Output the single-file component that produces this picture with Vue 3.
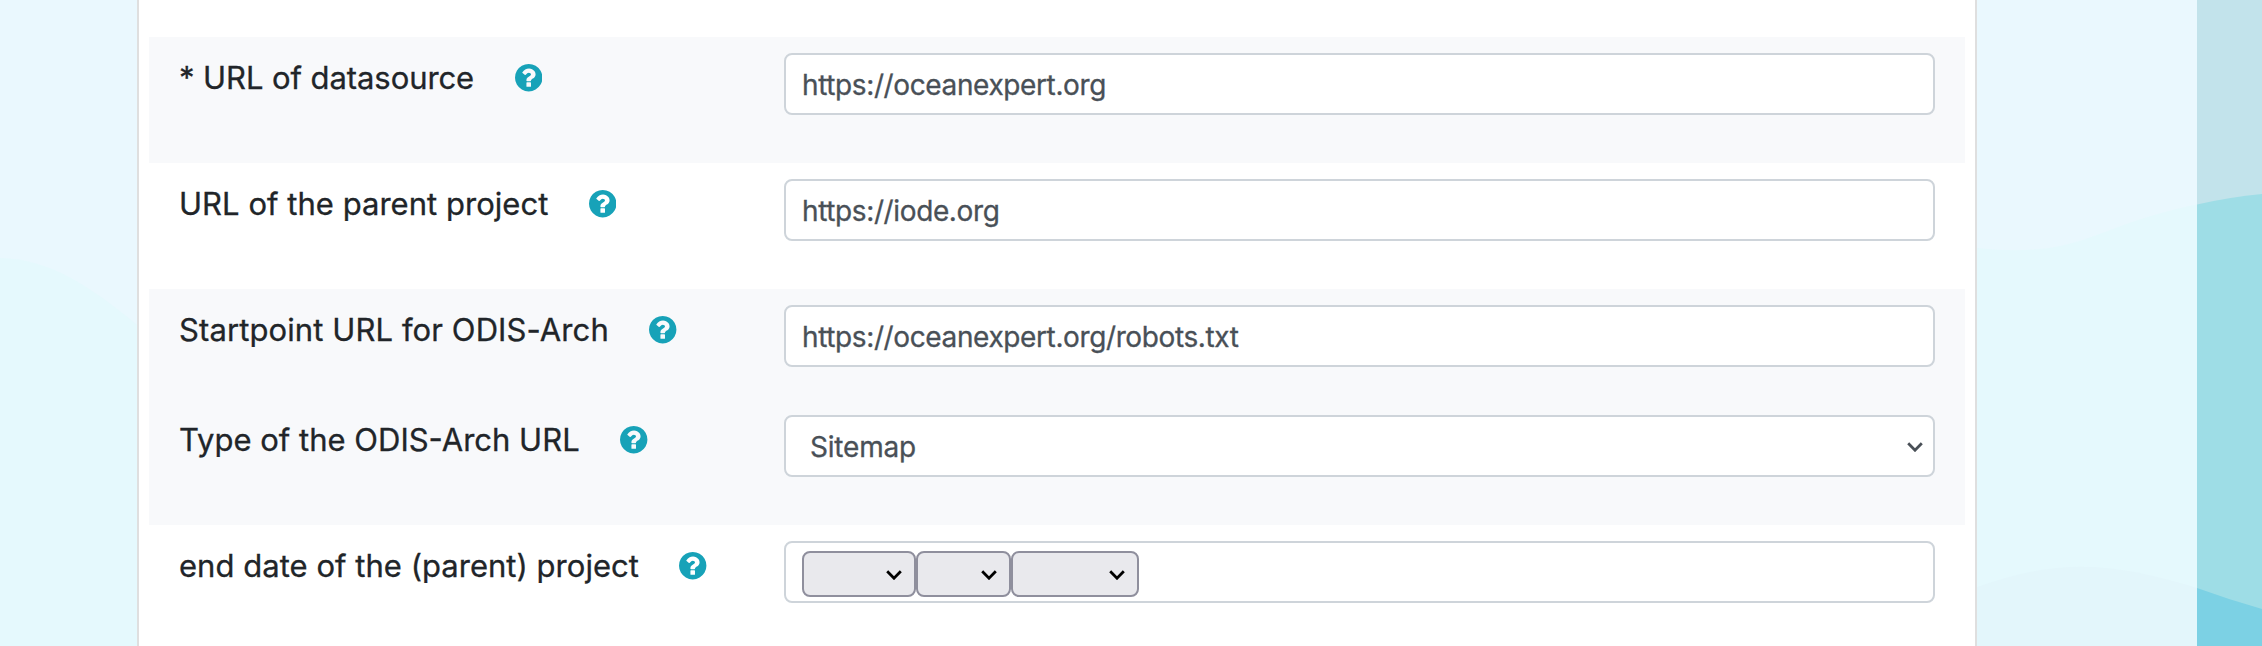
<script setup>
import { ref } from 'vue'

const rows = ref([
  { id: 'url', label: '* URL of datasource', value: 'https://oceanexpert.org', kind: 'text', shaded: true, tone: 'tight' },
  { id: 'parent', label: 'URL of the parent project', value: 'https://iode.org', kind: 'text', tone: 'even' },
  { id: 'start', label: 'Startpoint URL for ODIS-Arch', value: 'https://oceanexpert.org/robots.txt', kind: 'text', shaded: true, compact: true, tone: 'loose' },
  { id: 'type', label: 'Type of the ODIS-Arch URL', value: 'Sitemap', kind: 'select', shaded: true, tone: 'normal' },
  { id: 'end', label: 'end date of the (parent) project', kind: 'date', tone: 'even' },
])
const dateParts = ['day', 'month', 'year']
</script>

<template>
  <div class="page">
    <svg class="waves" viewBox="0 0 2262 646" aria-hidden="true">
      <rect width="2262" height="646" fill="#eaf8fe" />
      <path d="M0 258C50 259 90 286 137 325V646H0Z" fill="#e5f9fd" />
      <path d="M1977 248C2085 259 2090 226 2197 204.500V646H1977Z" fill="#e5f9fd" />
      <path d="M1977 587C2060 557 2115 563 2197 588V646H1977Z" fill="#e3f6fb" />
      <rect x="2197" width="65" height="646" fill="#c2e3eb" />
      <path d="M2197 204.500Q2230 197 2262 194V646H2197Z" fill="#9edde6" />
      <path d="M2197 588Q2230 600 2262 609V646H2197Z" fill="#7cd1e4" />
    </svg>
    <main class="panel">
      <div
        v-for="row in rows"
        :key="row.id"
        class="row"
        :class="{ shaded: row.shaded, compact: row.compact }"
      >
        <div class="label">
          <label :for="row.id" :class="row.tone">{{ row.label }}</label>
          <svg class="help" viewBox="128 128 1536 1536" aria-hidden="true">
            <path fill="#17a2b8" d="M1024 1376v-192q0-14-9-23t-23-9h-192q-14 0-23 9t-9 23v192q0 14 9 23t23 9h192q14 0 23-9t9-23zM1280 704q0-88-55.500-163t-138.500-116-170-41q-243 0-371 213-15 24 8 42l132 100q7 6 19 6 16 0 25-12 53-68 86-92 34-24 86-24 48 0 85.500 26t37.500 59q0 38-20 61t-68 45q-63 28-115.500 86.500t-52.500 125.500v36q0 14 9 23t23 9h192q14 0 23-9t9-23q0-19 21.500-49.500t54.500-49.500q32-18 49-28.500t46-35 44.500-48 28-60.500 12.500-81zM1664 896q0 209-103 385.500t-279.500 279.500-385.500 103-385.500-103-279.500-279.500-103-385.500 103-385.500 279.500-279.500 385.500-103 385.500 103 279.500 279.500 103 385.500z" />
          </svg>
        </div>
        <input v-if="row.kind === 'text'" :id="row.id" v-model="row.value" class="control" type="text" />
        <div v-else-if="row.kind === 'select'" class="control choice">
          <span>{{ row.value }}</span>
          <svg class="chevron" viewBox="0 0 16 10"><path d="M1.200 1.200 8 8.200 14.800 1.200" /></svg>
        </div>
        <div v-else class="control dates">
          <div v-for="part in dateParts" :key="part" class="part" :class="part">
            <svg class="chevron" viewBox="0 0 16 10"><path d="M1.200 1.200 8 8.200 14.800 1.200" /></svg>
          </div>
        </div>
      </div>
    </main>
  </div>
</template>

<style>
body {
  margin: 0;
  overflow: hidden;
}
</style>

<style scoped>
.page {
  position: relative;
  width: 2262px;
  height: 646px;
  overflow: hidden;
  font-family: Inter, "Liberation Sans", sans-serif;
  -webkit-text-stroke: 0.3px currentColor;
}
.waves {
  position: absolute;
  inset: 0;
  width: 2262px;
  height: 646px;
}
.panel {
  position: relative;
  box-sizing: border-box;
  width: 1840px;
  height: 646px;
  margin-left: 137px;
  padding: 37px 10px 0;
  background: #fff;
  border: solid #dfdfdf;
  border-width: 0 2px;
}
.row {
  box-sizing: border-box;
  display: flex;
  align-items: flex-start;
  height: 126px;
  padding: 16px 30px 0;
}
.row.compact {
  height: 110px;
}
.shaded {
  background: #f8f9fb;
}
.label {
  box-sizing: border-box;
  width: 605px;
  height: 50px;
  display: flex;
  align-items: center;
  color: #212529;
  font-size: 31px;
  line-height: 50px;
  white-space: nowrap;
}
.tight {
  letter-spacing: -0.08px;
}
.even {
  letter-spacing: 0.03px;
}
.loose {
  letter-spacing: 0.1px;
}
.help {
  width: 27.430px;
  height: 27.430px;
  margin-left: 40.500px;
  flex: none;
}
.control {
  box-sizing: border-box;
  width: 1151px;
  height: 62px;
  margin: 0;
  padding: 2px 16px 0;
  border: 2px solid #ced4da;
  border-radius: 8px;
  background: #fff;
  color: #495057;
  font-family: inherit;
  font-size: 28px;
  letter-spacing: -0.38px;
  -webkit-text-stroke: 0.3px currentColor;
  outline: none;
}
.choice {
  display: flex;
  align-items: center;
  justify-content: space-between;
  padding: 2px 10px 0 24px;
  letter-spacing: -0.2px;
}
.dates {
  display: flex;
  padding: 8px 16px 0;
}
.part {
  box-sizing: border-box;
  display: flex;
  align-items: center;
  justify-content: flex-end;
  width: 114px;
  height: 46px;
  padding: 2px 12px 0 0;
  border: 2px solid #8f8f9d;
  border-radius: 8px;
  background: #e9e9ed;
  color: #000;
}
.part.month {
  width: 95px;
}
.part.year {
  width: 128px;
}
.chevron {
  width: 16px;
  height: 10px;
  fill: none;
  stroke: currentColor;
  stroke-width: 2.800;
}
</style>
